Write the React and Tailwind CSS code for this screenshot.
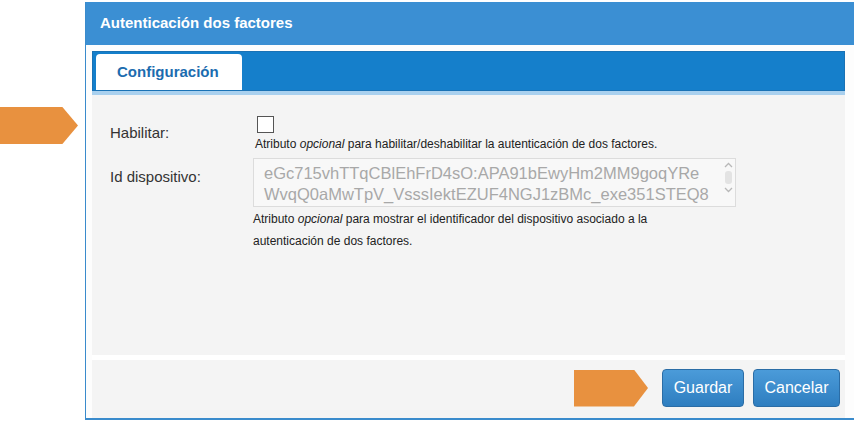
export default function App() {
  return (
    <div className="relative w-[854px] h-[421px] overflow-hidden bg-white font-['Liberation_Sans',Arial,sans-serif]">
      {/* annotation arrow */}
      <div className="absolute left-0 top-[107px] w-[78px] h-[37px] bg-[#e8913f] [clip-path:polygon(0_0,80%_0,100%_50%,80%_100%,0_100%)]" />

      <div className="ml-[85px] mt-[2px] w-[780px] h-[418px] flex flex-col border-l border-b-2 border-[#3a8bcc] bg-white">
        <div className="h-[43px] shrink-0 flex items-center pl-[14px] bg-[#3b8fd3] text-white font-bold text-[15px]">
          Autenticación dos factores
        </div>

        <div className="flex-1 flex flex-col pl-[6px] pr-[20px] pt-[6px] bg-[#fdfdfd]">
          <div className="h-[40px] shrink-0 flex items-end pl-[3px] bg-[#157fcb] border border-[#1a72b5]">
            <div className="h-[36px] w-[146px] flex items-center pl-[21px] bg-white rounded-t-[4px] text-[#1c6caf] font-bold text-[15px]">
              Configuración
            </div>
          </div>
          <div className="h-[4px] shrink-0 bg-[#a9d0ee]" />

          <div className="h-[260px] shrink-0 bg-[#f4f4f4] pl-[18px] pt-[21px]">
            <div className="flex">
              <div className="w-[145px] text-[15px] text-[#333] pt-[6px]">Habilitar:</div>
              <div className="flex flex-col">
                <div className="ml-[2px] w-[17px] h-[17px] border border-[#555] bg-white" />
                <div className="mt-[4px] text-[12px] text-[#222] leading-[15px] whitespace-nowrap">
                  Atributo <i>opcional</i> para habilitar/deshabilitar la autenticación de dos factores.
                </div>
              </div>
            </div>

            <div className="flex mt-[6px]">
              <div className="w-[143px] text-[15px] text-[#333] pt-[8px]">Id dispositivo:</div>
              <div className="flex flex-col">
                <div className="w-[483px] h-[49px] flex border border-[#dcdcdc] bg-[#f8f8f8]">
                  <div className="flex-1 pl-[10px] pt-[4px] text-[16.5px] leading-[21px] text-[#a8a8a8] whitespace-nowrap overflow-hidden">
                    <div>eGc715vhTTqCBlEhFrD4sO:APA91bEwyHm2MM9goqYRe</div>
                    <div>WvqQ0aMwTpV_VsssIektEZUF4NGJ1zBMc_exe351STEQ8</div>
                  </div>
                  <div className="w-[14px] flex flex-col items-center pt-[3px] text-[#b8b8b8]">
                    <svg width="9" height="6" viewBox="0 0 9 6"><path d="M1 5 L4.5 1.5 L8 5" fill="none" stroke="currentColor" strokeWidth="1.3" /></svg>
                    <div className="mt-[3px] w-[7px] h-[13px] rounded-[3px] bg-[#e3e3e3]" />
                    <svg className="mt-[3px]" width="9" height="6" viewBox="0 0 9 6"><path d="M1 1 L4.5 4.5 L8 1" fill="none" stroke="currentColor" strokeWidth="1.3" /></svg>
                  </div>
                </div>
                <div className="mt-[1px] text-[12px] text-[#222] leading-[22px] w-[400px]">
                  Atributo <i>opcional</i> para mostrar el identificador del dispositivo asociado a la autenticación de dos factores.
                </div>
              </div>
            </div>
          </div>

          <div className="h-[5px] shrink-0 bg-white" />
          <div className="flex-1 bg-[#f4f4f4] flex items-center justify-end pr-[5px] pb-[2px]">
            <div className="w-[74px] h-[37px] bg-[#e8913f] [clip-path:polygon(0_0,81%_0,100%_50%,81%_100%,0_100%)] mr-[14px]" />
            <button className="w-[82px] h-[38px] rounded-[4px] border border-[#2b6da6] bg-gradient-to-b from-[#4b9bd9] to-[#2e7ec0] text-white text-[16px]">
              Guardar
            </button>
            <button className="ml-[9px] w-[87px] h-[38px] rounded-[4px] border border-[#2b6da6] bg-gradient-to-b from-[#4b9bd9] to-[#2e7ec0] text-white text-[16px]">
              Cancelar
            </button>
          </div>
        </div>
      </div>
    </div>
  );
}
